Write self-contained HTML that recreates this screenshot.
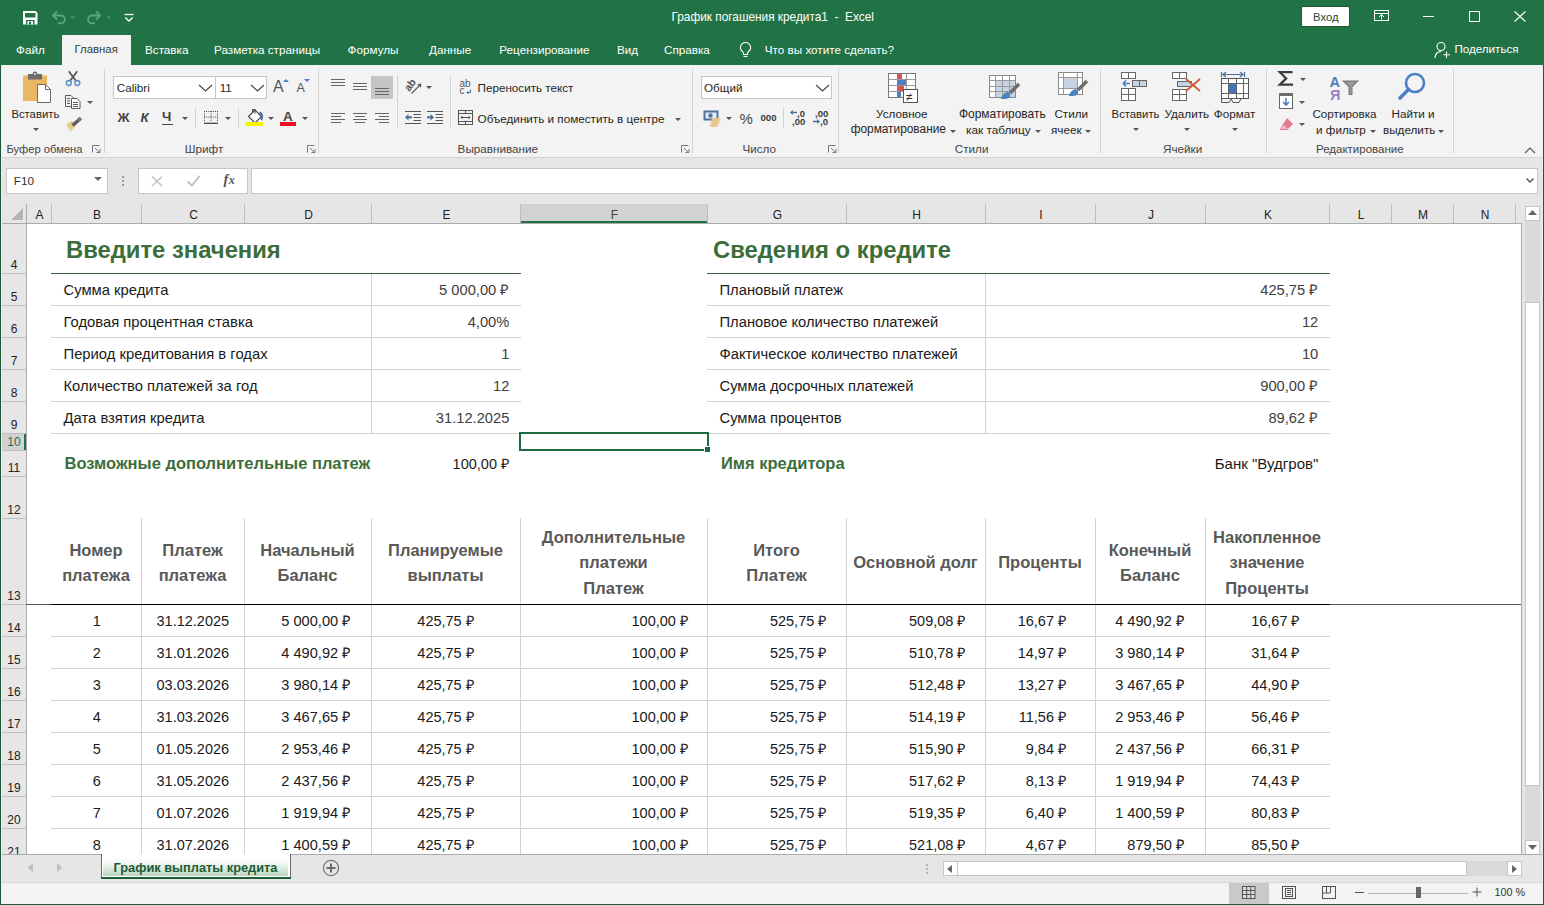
<!DOCTYPE html>
<html><head><meta charset="utf-8"><style>
html,body{margin:0;padding:0;width:1544px;height:905px;overflow:hidden;background:#fff;font-family:"Liberation Sans", sans-serif}
.a{position:absolute}
.t{line-height:1;white-space:nowrap}
svg{overflow:visible}
</style></head><body>
<div class="a" style="left:0px;top:0px;width:1544px;height:65px;background:#217346"></div>
<div class="a t" style="left:671.5px;top:11.77px;font-size:11.85px;color:#ffffff;font-weight:400;">График погашения кредита1&nbsp; -&nbsp; Excel</div>
<div class="a" style="left:1302px;top:7px;width:47px;height:19px;background:#fff;border-radius:1px;box-shadow:0 0 0 1px #1b5a35"></div>
<div class="a t" style="left:1313px;top:11.83px;font-size:11.3px;color:#2f4a3a;font-weight:400;">Вход</div>
<svg class="a" style="left:1374px;top:10px;" width="16" height="12" viewBox="0 0 16 12"><rect x="0.5" y="0.5" width="14" height="10" fill="none" stroke="#fff"/><path d="M0.5 3.5h14" stroke="#fff"/><path d="M7.5 9.5V5M5 7l2.5-2.5L10 7" stroke="#fff" fill="none"/></svg>
<div class="a" style="left:1423px;top:16px;width:11px;height:1px;background:#fff"></div>
<svg class="a" style="left:1468px;top:10px;" width="13" height="13" viewBox="0 0 13 13"><rect x="1.5" y="1.5" width="10" height="10" fill="none" stroke="#fff"/></svg>
<svg class="a" style="left:1513px;top:10px;" width="14" height="13" viewBox="0 0 14 13"><path d="M1.5 1.5l11 10M12.5 1.5l-11 10" stroke="#fff" stroke-width="1.1"/></svg>
<div class="a" style="left:62px;top:35px;width:69px;height:30px;background:#f3f3f3"></div>
<div class="a t" style="left:16px;top:43.90px;font-size:11.7px;color:#ffffff;font-weight:400;">Файл</div>
<div class="a t" style="left:74.5px;top:44.15px;font-size:11.4px;color:#2e3d35;font-weight:400;">Главная</div>
<div class="a t" style="left:145px;top:43.90px;font-size:11.7px;color:#ffffff;font-weight:400;">Вставка</div>
<div class="a t" style="left:214px;top:43.90px;font-size:11.7px;color:#ffffff;font-weight:400;">Разметка страницы</div>
<div class="a t" style="left:347.6px;top:43.90px;font-size:11.7px;color:#ffffff;font-weight:400;">Формулы</div>
<div class="a t" style="left:429px;top:43.90px;font-size:11.7px;color:#ffffff;font-weight:400;">Данные</div>
<div class="a t" style="left:499.3px;top:43.90px;font-size:11.7px;color:#ffffff;font-weight:400;">Рецензирование</div>
<div class="a t" style="left:617px;top:43.90px;font-size:11.7px;color:#ffffff;font-weight:400;">Вид</div>
<div class="a t" style="left:664px;top:43.90px;font-size:11.7px;color:#ffffff;font-weight:400;">Справка</div>
<div class="a t" style="left:764.8px;top:43.90px;font-size:11.7px;color:#ffffff;font-weight:400;">Что вы хотите сделать?</div>
<svg class="a" style="left:738px;top:41px;" width="15" height="18" viewBox="0 0 15 18"><path d="M7.5 1.5a5 5 0 0 0-3 9c.6.6 1 1.4 1 2.3v.7h4v-.7c0-.9.4-1.7 1-2.3a5 5 0 0 0-3-9z" fill="none" stroke="#fff" stroke-width="1.1"/><path d="M5.5 15.5h4" stroke="#fff" stroke-width="1.1"/></svg>
<svg class="a" style="left:1434px;top:41px;" width="17" height="18" viewBox="0 0 17 18"><circle cx="7" cy="5.5" r="4" fill="none" stroke="#fff" stroke-width="1.1"/><path d="M1 17c0-4 2.5-6.5 6-6.5" fill="none" stroke="#fff" stroke-width="1.1"/><path d="M12.5 10.5v6.5M9.5 13.8h6.5" stroke="#fff" stroke-width="1.1"/></svg>
<div class="a t" style="left:1454.5px;top:43.48px;font-size:11.6px;color:#ffffff;font-weight:400;">Поделиться</div>
<div class="a" style="left:1px;top:65px;width:1542px;height:92px;background:#f3f3f3"></div>
<div class="a" style="left:1px;top:157px;width:1542px;height:1px;background:#d4d4d4"></div>
<div class="a" style="left:104px;top:69px;width:1px;height:84px;background:#d2d2d2"></div>
<div class="a" style="left:318px;top:69px;width:1px;height:84px;background:#d2d2d2"></div>
<div class="a" style="left:692px;top:69px;width:1px;height:84px;background:#d2d2d2"></div>
<div class="a" style="left:838px;top:69px;width:1px;height:84px;background:#d2d2d2"></div>
<div class="a" style="left:1100px;top:69px;width:1px;height:84px;background:#d2d2d2"></div>
<div class="a" style="left:1266px;top:69px;width:1px;height:84px;background:#d2d2d2"></div>
<div class="a" style="left:1453px;top:69px;width:1px;height:84px;background:#d2d2d2"></div>
<div class="a t" style="left:6.5px;top:143.72px;font-size:11.2px;color:#444444;font-weight:400;">Буфер обмена</div>
<div class="a t" style="left:184.8px;top:143.10px;font-size:11.7px;color:#444444;font-weight:400;">Шрифт</div>
<div class="a t" style="left:457.6px;top:143.10px;font-size:11.7px;color:#444444;font-weight:400;">Выравнивание</div>
<div class="a t" style="left:742.4px;top:143.10px;font-size:11.7px;color:#444444;font-weight:400;">Число</div>
<div class="a t" style="left:954.8px;top:143.10px;font-size:11.7px;color:#444444;font-weight:400;">Стили</div>
<div class="a t" style="left:1163px;top:143.10px;font-size:11.7px;color:#444444;font-weight:400;">Ячейки</div>
<div class="a t" style="left:1316px;top:143.67px;font-size:11.5px;color:#444444;font-weight:400;">Редактирование</div>
<svg class="a" style="left:92px;top:145px;" width="9" height="8" viewBox="0 0 9 8"><path d="M0.5 7.5V0.5h7" fill="none" stroke="#777"/><path d="M3 3l5 5M4.5 7.5h3.5V4" fill="none" stroke="#777"/></svg>
<svg class="a" style="left:307px;top:145px;" width="9" height="8" viewBox="0 0 9 8"><path d="M0.5 7.5V0.5h7" fill="none" stroke="#777"/><path d="M3 3l5 5M4.5 7.5h3.5V4" fill="none" stroke="#777"/></svg>
<svg class="a" style="left:681px;top:145px;" width="9" height="8" viewBox="0 0 9 8"><path d="M0.5 7.5V0.5h7" fill="none" stroke="#777"/><path d="M3 3l5 5M4.5 7.5h3.5V4" fill="none" stroke="#777"/></svg>
<svg class="a" style="left:828px;top:145px;" width="9" height="8" viewBox="0 0 9 8"><path d="M0.5 7.5V0.5h7" fill="none" stroke="#777"/><path d="M3 3l5 5M4.5 7.5h3.5V4" fill="none" stroke="#777"/></svg>
<svg class="a" style="left:1524px;top:146px;" width="12" height="8" viewBox="0 0 12 8"><path d="M1 7l5-5 5 5" fill="none" stroke="#555" stroke-width="1.1"/></svg>
<div class="a t" style="left:11.4px;top:108.63px;font-size:11.3px;color:#262626;font-weight:400;">Вставить</div>
<svg class="a" style="left:33px;top:128px;" width="6" height="4" viewBox="0 0 6 4"><path d="M0 0h6l-3 3z" fill="#555"/></svg>
<svg class="a" style="left:87px;top:101px;" width="6" height="4" viewBox="0 0 6 4"><path d="M0 0h6l-3 3z" fill="#555"/></svg>
<div class="a" style="left:113px;top:76px;width:103px;height:23px;background:#fff;border:1px solid #c6c6c6;box-sizing:border-box"></div>
<div class="a" style="left:215px;top:76px;width:52px;height:23px;background:#fff;border:1px solid #c6c6c6;box-sizing:border-box"></div>
<div class="a t" style="left:116.7px;top:82.10px;font-size:11.7px;color:#262626;font-weight:400;">Calibri</div>
<div class="a t" style="left:219.7px;top:82.10px;font-size:11.7px;color:#262626;font-weight:400;">11</div>
<svg class="a" style="left:198px;top:84px;" width="15" height="8" viewBox="0 0 15 8"><path d="M1 1l6.5 6 6.5-6" fill="none" stroke="#444" stroke-width="1.1"/></svg>
<svg class="a" style="left:249.5px;top:84px;" width="15" height="8" viewBox="0 0 15 8"><path d="M1 1l6.5 6 6.5-6" fill="none" stroke="#444" stroke-width="1.1"/></svg>
<div class="a t" style="left:273px;top:79.26px;font-size:16px;color:#555;font-weight:400;">A</div>
<svg class="a" style="left:283px;top:78px;" width="6" height="4" viewBox="0 0 6 4"><path d="M0 4l3-3 3 3z" fill="#4a7fc1"/></svg>
<div class="a t" style="left:296.5px;top:82.22px;font-size:12.5px;color:#555;font-weight:400;">A</div>
<svg class="a" style="left:304px;top:79px;" width="6" height="4" viewBox="0 0 6 4"><path d="M0 0l3 3 3-3z" fill="#4a7fc1"/></svg>
<div class="a t" style="left:117.5px;top:110.54px;font-size:13.3px;color:#444;font-weight:700;">Ж</div>
<div class="a t" style="left:140.5px;top:110.54px;font-size:13.3px;color:#444;font-weight:700;font-style:italic">К</div>
<div class="a t" style="left:162px;top:110.04px;font-size:13.3px;color:#444;font-weight:700;">Ч</div>
<div class="a" style="left:162px;top:124px;width:11px;height:1px;background:#444"></div>
<svg class="a" style="left:182px;top:117px;" width="6" height="4" viewBox="0 0 6 4"><path d="M0 0h6l-3 3z" fill="#555"/></svg>
<div class="a" style="left:195px;top:108px;width:1px;height:20px;background:#d2d2d2"></div>
<svg class="a" style="left:224.5px;top:117px;" width="6" height="4" viewBox="0 0 6 4"><path d="M0 0h6l-3 3z" fill="#555"/></svg>
<div class="a" style="left:238px;top:108px;width:1px;height:20px;background:#d2d2d2"></div>
<svg class="a" style="left:268px;top:117px;" width="6" height="4" viewBox="0 0 6 4"><path d="M0 0h6l-3 3z" fill="#555"/></svg>
<div class="a t" style="left:283px;top:110.07px;font-size:13.5px;color:#444;font-weight:700;">A</div>
<div class="a" style="left:280px;top:122px;width:16px;height:4px;background:#e81123"></div>
<svg class="a" style="left:302px;top:117px;" width="6" height="4" viewBox="0 0 6 4"><path d="M0 0h6l-3 3z" fill="#555"/></svg>
<svg class="a" style="left:331px;top:79px;" width="16" height="10" viewBox="0 0 16 10"><path d="M0 0.5h14" stroke="#666"/><path d="M0 3.5h14" stroke="#666"/><path d="M0 6.5h14" stroke="#666"/></svg>
<svg class="a" style="left:353px;top:83px;" width="16" height="10" viewBox="0 0 16 10"><path d="M0 0.5h14" stroke="#666"/><path d="M0 3.5h14" stroke="#666"/><path d="M0 6.5h14" stroke="#666"/></svg>
<div class="a" style="left:371px;top:76px;width:22px;height:23px;background:#c5c5c5"></div>
<svg class="a" style="left:375px;top:88px;" width="16" height="10" viewBox="0 0 16 10"><path d="M0 0.5h14" stroke="#666"/><path d="M0 3.5h14" stroke="#666"/><path d="M0 6.5h14" stroke="#666"/></svg>
<svg class="a" style="left:331px;top:113px;" width="16" height="13" viewBox="0 0 16 13"><path d="M0 0.5h14" stroke="#666"/><path d="M0 3.5h10" stroke="#666"/><path d="M0 6.5h14" stroke="#666"/><path d="M0 9.5h10" stroke="#666"/></svg>
<svg class="a" style="left:353px;top:113px;" width="16" height="13" viewBox="0 0 16 13"><path d="M0 0.5h14" stroke="#666"/><path d="M2 3.5h10" stroke="#666"/><path d="M0 6.5h14" stroke="#666"/><path d="M2 9.5h10" stroke="#666"/></svg>
<svg class="a" style="left:375px;top:113px;" width="16" height="13" viewBox="0 0 16 13"><path d="M0 0.5h14" stroke="#666"/><path d="M4 3.5h10" stroke="#666"/><path d="M0 6.5h14" stroke="#666"/><path d="M4 9.5h10" stroke="#666"/></svg>
<div class="a" style="left:397px;top:76px;width:1px;height:52px;background:#d2d2d2"></div>
<svg class="a" style="left:425.5px;top:86px;" width="6" height="4" viewBox="0 0 6 4"><path d="M0 0h6l-3 3z" fill="#555"/></svg>
<div class="a" style="left:450px;top:76px;width:1px;height:52px;background:#d2d2d2"></div>
<div class="a t" style="left:477.6px;top:82.13px;font-size:11.66px;color:#262626;font-weight:400;">Переносить текст</div>
<div class="a t" style="left:477.6px;top:112.60px;font-size:11.7px;color:#262626;font-weight:400;">Объединить и поместить в центре</div>
<svg class="a" style="left:675px;top:118px;" width="6" height="4" viewBox="0 0 6 4"><path d="M0 0h6l-3 3z" fill="#555"/></svg>
<div class="a" style="left:701px;top:76px;width:131px;height:23px;background:#fff;border:1px solid #c6c6c6;box-sizing:border-box"></div>
<div class="a t" style="left:704px;top:82.10px;font-size:11.7px;color:#262626;font-weight:400;">Общий</div>
<svg class="a" style="left:815px;top:84px;" width="15" height="8" viewBox="0 0 15 8"><path d="M1 1l6.5 6 6.5-6" fill="none" stroke="#444" stroke-width="1.1"/></svg>
<svg class="a" style="left:726px;top:117px;" width="6" height="4" viewBox="0 0 6 4"><path d="M0 0h6l-3 3z" fill="#555"/></svg>
<div class="a t" style="left:739.5px;top:111.30px;font-size:15px;color:#444;font-weight:400;">%</div>
<div class="a t" style="left:760.5px;top:113.37px;font-size:9.6px;color:#3a3a3a;font-weight:700;">000</div>
<div class="a" style="left:783px;top:108px;width:1px;height:20px;background:#d2d2d2"></div>
<svg class="a" style="left:888px;top:73px;" width="31" height="31" viewBox="0 0 31 31"><rect x="0.5" y="0.5" width="27" height="24" fill="#fff" stroke="#777"/><path d="M9.5 0.5v24M18.5 0.5v24M0.5 6.5h27M0.5 12.5h27M0.5 18.5h27" stroke="#999"/><rect x="9" y="1" width="5" height="5" fill="#d9534f"/><rect x="9" y="7" width="9" height="5" fill="#4a7fc1"/><rect x="9" y="13" width="7" height="5" fill="#d9534f"/><rect x="9" y="19" width="4" height="5" fill="#4a7fc1"/><rect x="15.5" y="16.5" width="14" height="13" fill="#fff" stroke="#555"/><text x="18" y="28" font-family="Liberation Sans" font-size="12" fill="#333">≠</text></svg>
<div class="a t" style="left:876px;top:108.40px;font-size:11.7px;color:#262626;font-weight:400;">Условное</div>
<div class="a t" style="left:850.7px;top:123.86px;font-size:11.86px;color:#262626;font-weight:400;">форматирование</div>
<svg class="a" style="left:949.5px;top:130px;" width="6" height="4" viewBox="0 0 6 4"><path d="M0 0h6l-3 3z" fill="#555"/></svg>
<svg class="a" style="left:989px;top:75px;" width="31" height="31" viewBox="0 0 31 31"><rect x="0.5" y="0.5" width="26" height="22" fill="#fff" stroke="#888"/><rect x="6" y="5" width="20" height="17" fill="#c5d3e3"/><path d="M6.5 0.5v22M13.5 0.5v22M20.5 0.5v22M0.5 5.5h26M0.5 11.5h26M0.5 16.5h26" stroke="#999"/><path d="M30 9l-9 9" stroke="#6d6d6d" stroke-width="3.5"/><path d="M19 17c-3 0-6 3-7 7h4c4 0 6-3 5-5z" fill="#4a7fc1"/></svg>
<div class="a t" style="left:959px;top:108.98px;font-size:11.95px;color:#262626;font-weight:400;">Форматировать</div>
<div class="a t" style="left:966px;top:124.71px;font-size:11.8px;color:#262626;font-weight:400;">как таблицу</div>
<svg class="a" style="left:1035px;top:130px;" width="6" height="4" viewBox="0 0 6 4"><path d="M0 0h6l-3 3z" fill="#555"/></svg>
<svg class="a" style="left:1058px;top:72px;" width="30" height="31" viewBox="0 0 30 31"><rect x="0.5" y="0.5" width="24" height="22" fill="#fff" stroke="#888"/><rect x="5" y="5" width="15" height="12" fill="#c5d3e3"/><path d="M5.5 0.5v22M19.5 0.5v22M0.5 5.5h24M0.5 16.5h24" stroke="#999"/><path d="M29 9l-9 9" stroke="#6d6d6d" stroke-width="3.5"/><path d="M18 17c-3 0-6 3-7 7h4c4 0 6-3 5-5z" fill="#4a7fc1"/></svg>
<div class="a t" style="left:1054.4px;top:108.40px;font-size:11.7px;color:#262626;font-weight:400;">Стили</div>
<div class="a t" style="left:1051px;top:124.00px;font-size:11.7px;color:#262626;font-weight:400;">ячеек</div>
<svg class="a" style="left:1085px;top:130px;" width="6" height="4" viewBox="0 0 6 4"><path d="M0 0h6l-3 3z" fill="#555"/></svg>
<svg class="a" style="left:1121px;top:72px;" width="28" height="29" viewBox="0 0 28 29"><rect x="0.5" y="0.5" width="14" height="6" fill="#fff" stroke="#666"/><path d="M7.5 0.5v6" stroke="#666"/><rect x="11.5" y="8.5" width="14" height="6" fill="#c5d3e3" stroke="#666"/><path d="M18.5 8.5v6" stroke="#666"/><path d="M2 11.5h7M2 11.5l3-3M2 11.5l3 3" stroke="#4a7fc1" stroke-width="1.6" fill="none"/><rect x="0.5" y="16.5" width="14" height="12" fill="#fff" stroke="#666"/><path d="M7.5 16.5v12M0.5 22.5h14" stroke="#666"/></svg>
<div class="a t" style="left:1111.6px;top:108.73px;font-size:11.3px;color:#262626;font-weight:400;">Вставить</div>
<svg class="a" style="left:1133px;top:128px;" width="6" height="4" viewBox="0 0 6 4"><path d="M0 0h6l-3 3z" fill="#555"/></svg>
<svg class="a" style="left:1172px;top:72px;" width="30" height="29" viewBox="0 0 30 29"><rect x="0.5" y="0.5" width="14" height="6" fill="#fff" stroke="#666"/><path d="M7.5 0.5v6" stroke="#666"/><rect x="5.5" y="9.5" width="14" height="5" fill="#c5d3e3" stroke="#666"/><rect x="0.5" y="17.5" width="14" height="11" fill="#fff" stroke="#666"/><path d="M7.5 17.5v11M0.5 22.5h14" stroke="#666"/><path d="M14 7l14 12M28 7L14 19" stroke="#d0573a" stroke-width="1.8"/></svg>
<div class="a t" style="left:1164.5px;top:108.40px;font-size:11.7px;color:#262626;font-weight:400;">Удалить</div>
<svg class="a" style="left:1184px;top:128px;" width="6" height="4" viewBox="0 0 6 4"><path d="M0 0h6l-3 3z" fill="#555"/></svg>
<div class="a t" style="left:1213.8px;top:108.40px;font-size:11.7px;color:#262626;font-weight:400;">Формат</div>
<svg class="a" style="left:1232px;top:128px;" width="6" height="4" viewBox="0 0 6 4"><path d="M0 0h6l-3 3z" fill="#555"/></svg>
<svg class="a" style="left:1300px;top:78px;" width="6" height="4" viewBox="0 0 6 4"><path d="M0 0h6l-3 3z" fill="#555"/></svg>
<svg class="a" style="left:1279px;top:93px;" width="15" height="17" viewBox="0 0 15 17"><rect x="0.5" y="0.5" width="13" height="15" fill="#fff" stroke="#666"/><rect x="0" y="0" width="14" height="3" fill="#6d6d6d"/><path d="M7 5v7M4 9l3 3 3-3" stroke="#4a7fc1" stroke-width="1.6" fill="none"/></svg>
<svg class="a" style="left:1298.5px;top:101px;" width="6" height="4" viewBox="0 0 6 4"><path d="M0 0h6l-3 3z" fill="#555"/></svg>
<svg class="a" style="left:1279px;top:117px;" width="15" height="14" viewBox="0 0 15 14"><path d="M8 1l6 6-6 6-7-0v-1z" fill="#e07b8e"/><path d="M1 12l4-4 4 4" fill="#f2b8c3"/></svg>
<svg class="a" style="left:1298.5px;top:123px;" width="6" height="4" viewBox="0 0 6 4"><path d="M0 0h6l-3 3z" fill="#555"/></svg>
<div class="a t" style="left:1329.5px;top:75.23px;font-size:14.5px;color:#4a7fc1;font-weight:700;">A</div>
<div class="a t" style="left:1330px;top:88.23px;font-size:14.5px;color:#9b7fc8;font-weight:700;">Я</div>
<div class="a t" style="left:1312.4px;top:108.40px;font-size:11.7px;color:#262626;font-weight:400;">Сортировка</div>
<div class="a t" style="left:1316px;top:124.00px;font-size:11.7px;color:#262626;font-weight:400;">и фильтр</div>
<svg class="a" style="left:1370px;top:130px;" width="6" height="4" viewBox="0 0 6 4"><path d="M0 0h6l-3 3z" fill="#555"/></svg>
<svg class="a" style="left:1398px;top:72px;" width="30" height="30" viewBox="0 0 30 30"><circle cx="17" cy="11" r="9" fill="none" stroke="#4a7fc1" stroke-width="2.6"/><path d="M10.5 17.5L2 26" stroke="#4a7fc1" stroke-width="3.6" stroke-linecap="round"/></svg>
<div class="a t" style="left:1391.5px;top:108.40px;font-size:11.7px;color:#262626;font-weight:400;">Найти и</div>
<div class="a t" style="left:1383px;top:124.00px;font-size:11.7px;color:#262626;font-weight:400;">выделить</div>
<svg class="a" style="left:1437.5px;top:130px;" width="6" height="4" viewBox="0 0 6 4"><path d="M0 0h6l-3 3z" fill="#555"/></svg>
<div class="a" style="left:1px;top:158px;width:1542px;height:46px;background:#e6e6e6"></div>
<div class="a" style="left:6px;top:168px;width:102px;height:26px;background:#fff;border:1px solid #c6c6c6;box-sizing:border-box"></div>
<div class="a t" style="left:13.7px;top:175.81px;font-size:11.8px;color:#333;font-weight:400;">F10</div>
<svg class="a" style="left:94px;top:177px;" width="8" height="5" viewBox="0 0 8 5"><path d="M0 0h8l-4 4z" fill="#666"/></svg>
<div class="a" style="left:122px;top:176px;width:2px;height:2px;background:#9a9a9a"></div>
<div class="a" style="left:122px;top:180px;width:2px;height:2px;background:#9a9a9a"></div>
<div class="a" style="left:122px;top:184px;width:2px;height:2px;background:#9a9a9a"></div>
<div class="a" style="left:138px;top:168px;width:110px;height:26px;background:#fff;border:1px solid #c6c6c6;box-sizing:border-box"></div>
<svg class="a" style="left:151px;top:175px;" width="12" height="12" viewBox="0 0 12 12"><path d="M1 1.5l10 9.5M11 1.5L1 11" stroke="#c2c2c2" stroke-width="1.5"/></svg>
<svg class="a" style="left:186px;top:174px;" width="15" height="13" viewBox="0 0 15 13"><path d="M1.5 7.5l4.5 4L13.5 2" stroke="#c2c2c2" stroke-width="2" fill="none"/></svg>
<div class="a t" style="left:223.5px;top:172.33px;font-size:14.5px;color:#555;font-weight:700;font-family:'Liberation Serif',serif"><i>f</i><i style="font-size:12px;margin-left:0.5px">x</i></div>
<div class="a" style="left:251px;top:168px;width:1287px;height:26px;background:#fff;border:1px solid #c6c6c6;box-sizing:border-box"></div>
<svg class="a" style="left:1526px;top:178px;" width="8" height="5" viewBox="0 0 8 5"><path d="M0.5 0.5l3.5 3.5 3.5-3.5" stroke="#555" stroke-width="1.4" fill="none"/></svg>
<div class="a" style="left:1px;top:204px;width:1521px;height:19px;background:#e6e6e6"></div>
<div class="a" style="left:520px;top:204px;width:187px;height:19px;background:#d2d2d2"></div>
<div class="a" style="left:520px;top:221px;width:188px;height:2px;background:#217346"></div>
<div class="a" style="left:1px;top:223px;width:1521px;height:1px;background:#ababab"></div>
<div class="a" style="left:51px;top:204px;width:1px;height:19px;background:#bdbdbd"></div>
<div class="a" style="left:141px;top:204px;width:1px;height:19px;background:#bdbdbd"></div>
<div class="a" style="left:244px;top:204px;width:1px;height:19px;background:#bdbdbd"></div>
<div class="a" style="left:371px;top:204px;width:1px;height:19px;background:#bdbdbd"></div>
<div class="a" style="left:520px;top:204px;width:1px;height:19px;background:#bdbdbd"></div>
<div class="a" style="left:707px;top:204px;width:1px;height:19px;background:#bdbdbd"></div>
<div class="a" style="left:846px;top:204px;width:1px;height:19px;background:#bdbdbd"></div>
<div class="a" style="left:985px;top:204px;width:1px;height:19px;background:#bdbdbd"></div>
<div class="a" style="left:1095px;top:204px;width:1px;height:19px;background:#bdbdbd"></div>
<div class="a" style="left:1205px;top:204px;width:1px;height:19px;background:#bdbdbd"></div>
<div class="a" style="left:1329px;top:204px;width:1px;height:19px;background:#bdbdbd"></div>
<div class="a" style="left:1391px;top:204px;width:1px;height:19px;background:#bdbdbd"></div>
<div class="a" style="left:1453px;top:204px;width:1px;height:19px;background:#bdbdbd"></div>
<div class="a" style="left:1515px;top:204px;width:1px;height:19px;background:#bdbdbd"></div>
<div class="a t" style="left:-260.5px;width:600px;text-align:center;top:209.14px;font-size:12px;color:#222;font-weight:400;">A</div>
<div class="a t" style="left:-203.0px;width:600px;text-align:center;top:209.14px;font-size:12px;color:#222;font-weight:400;">B</div>
<div class="a t" style="left:-106.5px;width:600px;text-align:center;top:209.14px;font-size:12px;color:#222;font-weight:400;">C</div>
<div class="a t" style="left:8.5px;width:600px;text-align:center;top:209.14px;font-size:12px;color:#222;font-weight:400;">D</div>
<div class="a t" style="left:146.5px;width:600px;text-align:center;top:209.14px;font-size:12px;color:#222;font-weight:400;">E</div>
<div class="a t" style="left:314.5px;width:600px;text-align:center;top:209.14px;font-size:12px;color:#444;font-weight:400;">F</div>
<div class="a t" style="left:477.5px;width:600px;text-align:center;top:209.14px;font-size:12px;color:#222;font-weight:400;">G</div>
<div class="a t" style="left:616.5px;width:600px;text-align:center;top:209.14px;font-size:12px;color:#222;font-weight:400;">H</div>
<div class="a t" style="left:741.0px;width:600px;text-align:center;top:209.14px;font-size:12px;color:#222;font-weight:400;">I</div>
<div class="a t" style="left:851.0px;width:600px;text-align:center;top:209.14px;font-size:12px;color:#222;font-weight:400;">J</div>
<div class="a t" style="left:968.0px;width:600px;text-align:center;top:209.14px;font-size:12px;color:#222;font-weight:400;">K</div>
<div class="a t" style="left:1061.0px;width:600px;text-align:center;top:209.14px;font-size:12px;color:#222;font-weight:400;">L</div>
<div class="a t" style="left:1123.0px;width:600px;text-align:center;top:209.14px;font-size:12px;color:#222;font-weight:400;">M</div>
<div class="a t" style="left:1185.0px;width:600px;text-align:center;top:209.14px;font-size:12px;color:#222;font-weight:400;">N</div>
<svg class="a" style="left:10px;top:207px;" width="14" height="14" viewBox="0 0 14 14"><path d="M13 1v12H1z" fill="#b4b4b4"/></svg>
<div class="a" style="left:26px;top:204px;width:1px;height:650px;background:#ababab"></div>
<div class="a" style="left:1px;top:224px;width:25px;height:630px;background:#e6e6e6"></div>
<div class="a" style="left:1px;top:433px;width:25px;height:17px;background:#d2d2d2"></div>
<div class="a" style="left:24px;top:433px;width:2px;height:17px;background:#217346"></div>
<div class="a" style="left:1px;top:273px;width:25px;height:1px;background:#bdbdbd"></div>
<div class="a t" style="left:-286px;width:600px;text-align:center;top:259.34px;font-size:12px;color:#222;font-weight:400;">4</div>
<div class="a" style="left:1px;top:305px;width:25px;height:1px;background:#bdbdbd"></div>
<div class="a t" style="left:-286px;width:600px;text-align:center;top:291.34px;font-size:12px;color:#222;font-weight:400;">5</div>
<div class="a" style="left:1px;top:337px;width:25px;height:1px;background:#bdbdbd"></div>
<div class="a t" style="left:-286px;width:600px;text-align:center;top:323.34px;font-size:12px;color:#222;font-weight:400;">6</div>
<div class="a" style="left:1px;top:369px;width:25px;height:1px;background:#bdbdbd"></div>
<div class="a t" style="left:-286px;width:600px;text-align:center;top:355.34px;font-size:12px;color:#222;font-weight:400;">7</div>
<div class="a" style="left:1px;top:401px;width:25px;height:1px;background:#bdbdbd"></div>
<div class="a t" style="left:-286px;width:600px;text-align:center;top:387.34px;font-size:12px;color:#222;font-weight:400;">8</div>
<div class="a" style="left:1px;top:433px;width:25px;height:1px;background:#bdbdbd"></div>
<div class="a t" style="left:-286px;width:600px;text-align:center;top:419.34px;font-size:12px;color:#222;font-weight:400;">9</div>
<div class="a" style="left:1px;top:450px;width:25px;height:1px;background:#bdbdbd"></div>
<div class="a t" style="left:-286px;width:600px;text-align:center;top:436.34px;font-size:12px;color:#217346;font-weight:400;">10</div>
<div class="a" style="left:1px;top:476px;width:25px;height:1px;background:#bdbdbd"></div>
<div class="a t" style="left:-286px;width:600px;text-align:center;top:462.34px;font-size:12px;color:#222;font-weight:400;">11</div>
<div class="a" style="left:1px;top:518px;width:25px;height:1px;background:#bdbdbd"></div>
<div class="a t" style="left:-286px;width:600px;text-align:center;top:504.34px;font-size:12px;color:#222;font-weight:400;">12</div>
<div class="a" style="left:1px;top:604px;width:25px;height:1px;background:#bdbdbd"></div>
<div class="a t" style="left:-286px;width:600px;text-align:center;top:590.34px;font-size:12px;color:#222;font-weight:400;">13</div>
<div class="a" style="left:1px;top:636px;width:25px;height:1px;background:#bdbdbd"></div>
<div class="a t" style="left:-286px;width:600px;text-align:center;top:622.34px;font-size:12px;color:#222;font-weight:400;">14</div>
<div class="a" style="left:1px;top:668px;width:25px;height:1px;background:#bdbdbd"></div>
<div class="a t" style="left:-286px;width:600px;text-align:center;top:654.34px;font-size:12px;color:#222;font-weight:400;">15</div>
<div class="a" style="left:1px;top:700px;width:25px;height:1px;background:#bdbdbd"></div>
<div class="a t" style="left:-286px;width:600px;text-align:center;top:686.34px;font-size:12px;color:#222;font-weight:400;">16</div>
<div class="a" style="left:1px;top:732px;width:25px;height:1px;background:#bdbdbd"></div>
<div class="a t" style="left:-286px;width:600px;text-align:center;top:718.34px;font-size:12px;color:#222;font-weight:400;">17</div>
<div class="a" style="left:1px;top:764px;width:25px;height:1px;background:#bdbdbd"></div>
<div class="a t" style="left:-286px;width:600px;text-align:center;top:750.34px;font-size:12px;color:#222;font-weight:400;">18</div>
<div class="a" style="left:1px;top:796px;width:25px;height:1px;background:#bdbdbd"></div>
<div class="a t" style="left:-286px;width:600px;text-align:center;top:782.34px;font-size:12px;color:#222;font-weight:400;">19</div>
<div class="a" style="left:1px;top:828px;width:25px;height:1px;background:#bdbdbd"></div>
<div class="a t" style="left:-286px;width:600px;text-align:center;top:814.34px;font-size:12px;color:#222;font-weight:400;">20</div>
<div class="a t" style="left:-286px;width:600px;text-align:center;top:846.34px;font-size:12px;color:#222;font-weight:400;">21</div>
<div class="a" style="left:27px;top:224px;width:1494px;height:630px;background:#fff"></div>
<div class="a t" style="left:66px;top:237.85px;font-size:23.8px;color:#3b6e3b;font-weight:700;">Введите значения</div>
<div class="a t" style="left:713px;top:237.85px;font-size:23.8px;color:#3b6e3b;font-weight:700;">Сведения о кредите</div>
<div class="a" style="left:51px;top:273px;width:470px;height:1px;background:#3d5c3d"></div>
<div class="a" style="left:707px;top:273px;width:623px;height:1px;background:#3d5c3d"></div>
<div class="a t" style="left:63.5px;top:283.07px;font-size:14.8px;color:#1a1a1a;font-weight:400;">Сумма кредита</div>
<div class="a t" style="left:-90.69999999999999px;width:600px;text-align:right;top:282.56px;font-size:14.7px;color:#404040;font-weight:400;">5 000,00 ₽</div>
<div class="a t" style="left:719.5px;top:282.51px;font-size:14.75px;color:#1a1a1a;font-weight:400;">Плановый платеж</div>
<div class="a t" style="left:718.3px;width:600px;text-align:right;top:282.56px;font-size:14.7px;color:#404040;font-weight:400;">425,75 ₽</div>
<div class="a" style="left:51px;top:305px;width:470px;height:1px;background:#d2d2d2"></div>
<div class="a" style="left:707px;top:305px;width:623px;height:1px;background:#d2d2d2"></div>
<div class="a t" style="left:63.5px;top:315.07px;font-size:14.8px;color:#1a1a1a;font-weight:400;">Годовая процентная ставка</div>
<div class="a t" style="left:-90.69999999999999px;width:600px;text-align:right;top:314.56px;font-size:14.7px;color:#404040;font-weight:400;">4,00%</div>
<div class="a t" style="left:719.5px;top:314.51px;font-size:14.75px;color:#1a1a1a;font-weight:400;">Плановое количество платежей</div>
<div class="a t" style="left:718.3px;width:600px;text-align:right;top:314.56px;font-size:14.7px;color:#404040;font-weight:400;">12</div>
<div class="a" style="left:51px;top:337px;width:470px;height:1px;background:#d2d2d2"></div>
<div class="a" style="left:707px;top:337px;width:623px;height:1px;background:#d2d2d2"></div>
<div class="a t" style="left:63.5px;top:347.07px;font-size:14.8px;color:#1a1a1a;font-weight:400;">Период кредитования в годах</div>
<div class="a t" style="left:-90.69999999999999px;width:600px;text-align:right;top:346.56px;font-size:14.7px;color:#404040;font-weight:400;">1</div>
<div class="a t" style="left:719.5px;top:346.51px;font-size:14.75px;color:#1a1a1a;font-weight:400;">Фактическое количество платежей</div>
<div class="a t" style="left:718.3px;width:600px;text-align:right;top:346.56px;font-size:14.7px;color:#404040;font-weight:400;">10</div>
<div class="a" style="left:51px;top:369px;width:470px;height:1px;background:#d2d2d2"></div>
<div class="a" style="left:707px;top:369px;width:623px;height:1px;background:#d2d2d2"></div>
<div class="a t" style="left:63.5px;top:379.07px;font-size:14.8px;color:#1a1a1a;font-weight:400;">Количество платежей за год</div>
<div class="a t" style="left:-90.69999999999999px;width:600px;text-align:right;top:378.56px;font-size:14.7px;color:#404040;font-weight:400;">12</div>
<div class="a t" style="left:719.5px;top:378.51px;font-size:14.75px;color:#1a1a1a;font-weight:400;">Сумма досрочных платежей</div>
<div class="a t" style="left:718.3px;width:600px;text-align:right;top:378.56px;font-size:14.7px;color:#404040;font-weight:400;">900,00 ₽</div>
<div class="a" style="left:51px;top:401px;width:470px;height:1px;background:#d2d2d2"></div>
<div class="a" style="left:707px;top:401px;width:623px;height:1px;background:#d2d2d2"></div>
<div class="a t" style="left:63.5px;top:411.07px;font-size:14.8px;color:#1a1a1a;font-weight:400;">Дата взятия кредита</div>
<div class="a t" style="left:-90.69999999999999px;width:600px;text-align:right;top:410.56px;font-size:14.7px;color:#404040;font-weight:400;">31.12.2025</div>
<div class="a t" style="left:719.5px;top:410.51px;font-size:14.75px;color:#1a1a1a;font-weight:400;">Сумма процентов</div>
<div class="a t" style="left:718.3px;width:600px;text-align:right;top:410.56px;font-size:14.7px;color:#404040;font-weight:400;">89,62 ₽</div>
<div class="a" style="left:51px;top:433px;width:470px;height:1px;background:#d2d2d2"></div>
<div class="a" style="left:707px;top:433px;width:623px;height:1px;background:#d2d2d2"></div>
<div class="a" style="left:371px;top:274px;width:1px;height:159px;background:#d2d2d2"></div>
<div class="a" style="left:985px;top:274px;width:1px;height:159px;background:#d2d2d2"></div>
<div class="a t" style="left:64.5px;top:454.83px;font-size:16.5px;color:#3b6e3b;font-weight:700;width:306px;overflow:hidden;white-space:nowrap">Возможные дополнительные платеж</div>
<div class="a t" style="left:-91px;width:600px;text-align:right;top:456.53px;font-size:14.5px;color:#1a1a1a;font-weight:400;">100,00 ₽</div>
<div class="a t" style="left:721px;top:454.83px;font-size:16.5px;color:#3b6e3b;font-weight:700;">Имя кредитора</div>
<div class="a t" style="left:718.3px;width:600px;text-align:right;top:456.10px;font-size:15px;color:#1a1a1a;font-weight:400;">Банк "Вудгров"</div>
<div class="a" style="left:519px;top:432px;width:190px;height:19px;border:2px solid #1e6b40;box-sizing:border-box"></div>
<div class="a" style="left:705px;top:447px;width:5px;height:5px;background:#1e6b40;outline:1px solid #fff"></div>
<div class="a t" style="left:-204.0px;width:600px;text-align:center;top:541.73px;font-size:16.5px;color:#595959;font-weight:700;">Номер</div>
<div class="a t" style="left:-204.0px;width:600px;text-align:center;top:566.93px;font-size:16.5px;color:#595959;font-weight:700;">платежа</div>
<div class="a t" style="left:-107.5px;width:600px;text-align:center;top:541.73px;font-size:16.5px;color:#595959;font-weight:700;">Платеж</div>
<div class="a t" style="left:-107.5px;width:600px;text-align:center;top:566.93px;font-size:16.5px;color:#595959;font-weight:700;">платежа</div>
<div class="a t" style="left:7.5px;width:600px;text-align:center;top:541.73px;font-size:16.5px;color:#595959;font-weight:700;">Начальный</div>
<div class="a t" style="left:7.5px;width:600px;text-align:center;top:566.93px;font-size:16.5px;color:#595959;font-weight:700;">Баланс</div>
<div class="a t" style="left:145.5px;width:600px;text-align:center;top:541.73px;font-size:16.5px;color:#595959;font-weight:700;">Планируемые</div>
<div class="a t" style="left:145.5px;width:600px;text-align:center;top:566.93px;font-size:16.5px;color:#595959;font-weight:700;">выплаты</div>
<div class="a t" style="left:313.5px;width:600px;text-align:center;top:529.13px;font-size:16.5px;color:#595959;font-weight:700;">Дополнительные</div>
<div class="a t" style="left:313.5px;width:600px;text-align:center;top:554.33px;font-size:16.5px;color:#595959;font-weight:700;">платежи</div>
<div class="a t" style="left:313.5px;width:600px;text-align:center;top:579.53px;font-size:16.5px;color:#595959;font-weight:700;">Платеж</div>
<div class="a t" style="left:476.5px;width:600px;text-align:center;top:541.73px;font-size:16.5px;color:#595959;font-weight:700;">Итого</div>
<div class="a t" style="left:476.5px;width:600px;text-align:center;top:566.93px;font-size:16.5px;color:#595959;font-weight:700;">Платеж</div>
<div class="a t" style="left:615.5px;width:600px;text-align:center;top:554.33px;font-size:16.5px;color:#595959;font-weight:700;">Основной долг</div>
<div class="a t" style="left:740.0px;width:600px;text-align:center;top:554.33px;font-size:16.5px;color:#595959;font-weight:700;">Проценты</div>
<div class="a t" style="left:850.0px;width:600px;text-align:center;top:541.73px;font-size:16.5px;color:#595959;font-weight:700;">Конечный</div>
<div class="a t" style="left:850.0px;width:600px;text-align:center;top:566.93px;font-size:16.5px;color:#595959;font-weight:700;">Баланс</div>
<div class="a t" style="left:967.0px;width:600px;text-align:center;top:529.13px;font-size:16.5px;color:#595959;font-weight:700;">Накопленное</div>
<div class="a t" style="left:967.0px;width:600px;text-align:center;top:554.33px;font-size:16.5px;color:#595959;font-weight:700;">значение</div>
<div class="a t" style="left:967.0px;width:600px;text-align:center;top:579.53px;font-size:16.5px;color:#595959;font-weight:700;">Проценты</div>
<div class="a" style="left:141px;top:518px;width:1px;height:336px;background:#d2d2d2"></div>
<div class="a" style="left:244px;top:518px;width:1px;height:336px;background:#d2d2d2"></div>
<div class="a" style="left:371px;top:518px;width:1px;height:336px;background:#d2d2d2"></div>
<div class="a" style="left:520px;top:518px;width:1px;height:336px;background:#d2d2d2"></div>
<div class="a" style="left:707px;top:518px;width:1px;height:336px;background:#d2d2d2"></div>
<div class="a" style="left:846px;top:518px;width:1px;height:336px;background:#d2d2d2"></div>
<div class="a" style="left:985px;top:518px;width:1px;height:336px;background:#d2d2d2"></div>
<div class="a" style="left:1095px;top:518px;width:1px;height:336px;background:#d2d2d2"></div>
<div class="a" style="left:1205px;top:518px;width:1px;height:336px;background:#d2d2d2"></div>
<div class="a" style="left:26px;top:604px;width:25px;height:1px;background:#5a5a5a"></div>
<div class="a" style="left:51px;top:604px;width:1279px;height:1px;background:#000"></div>
<div class="a" style="left:1330px;top:604px;width:191px;height:1px;background:#5a5a5a"></div>
<div class="a t" style="left:-203.2px;width:600px;text-align:center;top:613.73px;font-size:14.5px;color:#1a1a1a;font-weight:400;">1</div>
<div class="a t" style="left:-107.19999999999999px;width:600px;text-align:center;top:613.73px;font-size:14.5px;color:#1a1a1a;font-weight:400;">31.12.2025</div>
<div class="a t" style="left:-248.8px;width:600px;text-align:right;top:613.64px;font-size:14.6px;color:#1a1a1a;font-weight:400;">5 000,00 ₽</div>
<div class="a t" style="left:-126.30000000000001px;width:600px;text-align:right;top:613.73px;font-size:14.5px;color:#1a1a1a;font-weight:400;">425,75 ₽</div>
<div class="a t" style="left:87.89999999999998px;width:600px;text-align:right;top:613.73px;font-size:14.5px;color:#1a1a1a;font-weight:400;">100,00 ₽</div>
<div class="a t" style="left:226.29999999999995px;width:600px;text-align:right;top:613.73px;font-size:14.5px;color:#1a1a1a;font-weight:400;">525,75 ₽</div>
<div class="a t" style="left:365.4px;width:600px;text-align:right;top:613.73px;font-size:14.5px;color:#1a1a1a;font-weight:400;">509,08 ₽</div>
<div class="a t" style="left:466px;width:600px;text-align:right;top:613.73px;font-size:14.5px;color:#1a1a1a;font-weight:400;">16,67 ₽</div>
<div class="a t" style="left:585px;width:600px;text-align:right;top:613.64px;font-size:14.6px;color:#1a1a1a;font-weight:400;">4 490,92 ₽</div>
<div class="a t" style="left:699.5px;width:600px;text-align:right;top:613.73px;font-size:14.5px;color:#1a1a1a;font-weight:400;">16,67 ₽</div>
<div class="a" style="left:51px;top:636px;width:1279px;height:1px;background:#d2d2d2"></div>
<div class="a t" style="left:-203.2px;width:600px;text-align:center;top:645.73px;font-size:14.5px;color:#1a1a1a;font-weight:400;">2</div>
<div class="a t" style="left:-107.19999999999999px;width:600px;text-align:center;top:645.73px;font-size:14.5px;color:#1a1a1a;font-weight:400;">31.01.2026</div>
<div class="a t" style="left:-248.8px;width:600px;text-align:right;top:645.64px;font-size:14.6px;color:#1a1a1a;font-weight:400;">4 490,92 ₽</div>
<div class="a t" style="left:-126.30000000000001px;width:600px;text-align:right;top:645.73px;font-size:14.5px;color:#1a1a1a;font-weight:400;">425,75 ₽</div>
<div class="a t" style="left:87.89999999999998px;width:600px;text-align:right;top:645.73px;font-size:14.5px;color:#1a1a1a;font-weight:400;">100,00 ₽</div>
<div class="a t" style="left:226.29999999999995px;width:600px;text-align:right;top:645.73px;font-size:14.5px;color:#1a1a1a;font-weight:400;">525,75 ₽</div>
<div class="a t" style="left:365.4px;width:600px;text-align:right;top:645.73px;font-size:14.5px;color:#1a1a1a;font-weight:400;">510,78 ₽</div>
<div class="a t" style="left:466px;width:600px;text-align:right;top:645.73px;font-size:14.5px;color:#1a1a1a;font-weight:400;">14,97 ₽</div>
<div class="a t" style="left:585px;width:600px;text-align:right;top:645.64px;font-size:14.6px;color:#1a1a1a;font-weight:400;">3 980,14 ₽</div>
<div class="a t" style="left:699.5px;width:600px;text-align:right;top:645.73px;font-size:14.5px;color:#1a1a1a;font-weight:400;">31,64 ₽</div>
<div class="a" style="left:51px;top:668px;width:1279px;height:1px;background:#d2d2d2"></div>
<div class="a t" style="left:-203.2px;width:600px;text-align:center;top:677.73px;font-size:14.5px;color:#1a1a1a;font-weight:400;">3</div>
<div class="a t" style="left:-107.19999999999999px;width:600px;text-align:center;top:677.73px;font-size:14.5px;color:#1a1a1a;font-weight:400;">03.03.2026</div>
<div class="a t" style="left:-248.8px;width:600px;text-align:right;top:677.64px;font-size:14.6px;color:#1a1a1a;font-weight:400;">3 980,14 ₽</div>
<div class="a t" style="left:-126.30000000000001px;width:600px;text-align:right;top:677.73px;font-size:14.5px;color:#1a1a1a;font-weight:400;">425,75 ₽</div>
<div class="a t" style="left:87.89999999999998px;width:600px;text-align:right;top:677.73px;font-size:14.5px;color:#1a1a1a;font-weight:400;">100,00 ₽</div>
<div class="a t" style="left:226.29999999999995px;width:600px;text-align:right;top:677.73px;font-size:14.5px;color:#1a1a1a;font-weight:400;">525,75 ₽</div>
<div class="a t" style="left:365.4px;width:600px;text-align:right;top:677.73px;font-size:14.5px;color:#1a1a1a;font-weight:400;">512,48 ₽</div>
<div class="a t" style="left:466px;width:600px;text-align:right;top:677.73px;font-size:14.5px;color:#1a1a1a;font-weight:400;">13,27 ₽</div>
<div class="a t" style="left:585px;width:600px;text-align:right;top:677.64px;font-size:14.6px;color:#1a1a1a;font-weight:400;">3 467,65 ₽</div>
<div class="a t" style="left:699.5px;width:600px;text-align:right;top:677.73px;font-size:14.5px;color:#1a1a1a;font-weight:400;">44,90 ₽</div>
<div class="a" style="left:51px;top:700px;width:1279px;height:1px;background:#d2d2d2"></div>
<div class="a t" style="left:-203.2px;width:600px;text-align:center;top:709.73px;font-size:14.5px;color:#1a1a1a;font-weight:400;">4</div>
<div class="a t" style="left:-107.19999999999999px;width:600px;text-align:center;top:709.73px;font-size:14.5px;color:#1a1a1a;font-weight:400;">31.03.2026</div>
<div class="a t" style="left:-248.8px;width:600px;text-align:right;top:709.64px;font-size:14.6px;color:#1a1a1a;font-weight:400;">3 467,65 ₽</div>
<div class="a t" style="left:-126.30000000000001px;width:600px;text-align:right;top:709.73px;font-size:14.5px;color:#1a1a1a;font-weight:400;">425,75 ₽</div>
<div class="a t" style="left:87.89999999999998px;width:600px;text-align:right;top:709.73px;font-size:14.5px;color:#1a1a1a;font-weight:400;">100,00 ₽</div>
<div class="a t" style="left:226.29999999999995px;width:600px;text-align:right;top:709.73px;font-size:14.5px;color:#1a1a1a;font-weight:400;">525,75 ₽</div>
<div class="a t" style="left:365.4px;width:600px;text-align:right;top:709.73px;font-size:14.5px;color:#1a1a1a;font-weight:400;">514,19 ₽</div>
<div class="a t" style="left:466px;width:600px;text-align:right;top:709.73px;font-size:14.5px;color:#1a1a1a;font-weight:400;">11,56 ₽</div>
<div class="a t" style="left:585px;width:600px;text-align:right;top:709.64px;font-size:14.6px;color:#1a1a1a;font-weight:400;">2 953,46 ₽</div>
<div class="a t" style="left:699.5px;width:600px;text-align:right;top:709.73px;font-size:14.5px;color:#1a1a1a;font-weight:400;">56,46 ₽</div>
<div class="a" style="left:51px;top:732px;width:1279px;height:1px;background:#d2d2d2"></div>
<div class="a t" style="left:-203.2px;width:600px;text-align:center;top:741.73px;font-size:14.5px;color:#1a1a1a;font-weight:400;">5</div>
<div class="a t" style="left:-107.19999999999999px;width:600px;text-align:center;top:741.73px;font-size:14.5px;color:#1a1a1a;font-weight:400;">01.05.2026</div>
<div class="a t" style="left:-248.8px;width:600px;text-align:right;top:741.64px;font-size:14.6px;color:#1a1a1a;font-weight:400;">2 953,46 ₽</div>
<div class="a t" style="left:-126.30000000000001px;width:600px;text-align:right;top:741.73px;font-size:14.5px;color:#1a1a1a;font-weight:400;">425,75 ₽</div>
<div class="a t" style="left:87.89999999999998px;width:600px;text-align:right;top:741.73px;font-size:14.5px;color:#1a1a1a;font-weight:400;">100,00 ₽</div>
<div class="a t" style="left:226.29999999999995px;width:600px;text-align:right;top:741.73px;font-size:14.5px;color:#1a1a1a;font-weight:400;">525,75 ₽</div>
<div class="a t" style="left:365.4px;width:600px;text-align:right;top:741.73px;font-size:14.5px;color:#1a1a1a;font-weight:400;">515,90 ₽</div>
<div class="a t" style="left:466px;width:600px;text-align:right;top:741.73px;font-size:14.5px;color:#1a1a1a;font-weight:400;">9,84 ₽</div>
<div class="a t" style="left:585px;width:600px;text-align:right;top:741.64px;font-size:14.6px;color:#1a1a1a;font-weight:400;">2 437,56 ₽</div>
<div class="a t" style="left:699.5px;width:600px;text-align:right;top:741.73px;font-size:14.5px;color:#1a1a1a;font-weight:400;">66,31 ₽</div>
<div class="a" style="left:51px;top:764px;width:1279px;height:1px;background:#d2d2d2"></div>
<div class="a t" style="left:-203.2px;width:600px;text-align:center;top:773.73px;font-size:14.5px;color:#1a1a1a;font-weight:400;">6</div>
<div class="a t" style="left:-107.19999999999999px;width:600px;text-align:center;top:773.73px;font-size:14.5px;color:#1a1a1a;font-weight:400;">31.05.2026</div>
<div class="a t" style="left:-248.8px;width:600px;text-align:right;top:773.64px;font-size:14.6px;color:#1a1a1a;font-weight:400;">2 437,56 ₽</div>
<div class="a t" style="left:-126.30000000000001px;width:600px;text-align:right;top:773.73px;font-size:14.5px;color:#1a1a1a;font-weight:400;">425,75 ₽</div>
<div class="a t" style="left:87.89999999999998px;width:600px;text-align:right;top:773.73px;font-size:14.5px;color:#1a1a1a;font-weight:400;">100,00 ₽</div>
<div class="a t" style="left:226.29999999999995px;width:600px;text-align:right;top:773.73px;font-size:14.5px;color:#1a1a1a;font-weight:400;">525,75 ₽</div>
<div class="a t" style="left:365.4px;width:600px;text-align:right;top:773.73px;font-size:14.5px;color:#1a1a1a;font-weight:400;">517,62 ₽</div>
<div class="a t" style="left:466px;width:600px;text-align:right;top:773.73px;font-size:14.5px;color:#1a1a1a;font-weight:400;">8,13 ₽</div>
<div class="a t" style="left:585px;width:600px;text-align:right;top:773.64px;font-size:14.6px;color:#1a1a1a;font-weight:400;">1 919,94 ₽</div>
<div class="a t" style="left:699.5px;width:600px;text-align:right;top:773.73px;font-size:14.5px;color:#1a1a1a;font-weight:400;">74,43 ₽</div>
<div class="a" style="left:51px;top:796px;width:1279px;height:1px;background:#d2d2d2"></div>
<div class="a t" style="left:-203.2px;width:600px;text-align:center;top:805.73px;font-size:14.5px;color:#1a1a1a;font-weight:400;">7</div>
<div class="a t" style="left:-107.19999999999999px;width:600px;text-align:center;top:805.73px;font-size:14.5px;color:#1a1a1a;font-weight:400;">01.07.2026</div>
<div class="a t" style="left:-248.8px;width:600px;text-align:right;top:805.64px;font-size:14.6px;color:#1a1a1a;font-weight:400;">1 919,94 ₽</div>
<div class="a t" style="left:-126.30000000000001px;width:600px;text-align:right;top:805.73px;font-size:14.5px;color:#1a1a1a;font-weight:400;">425,75 ₽</div>
<div class="a t" style="left:87.89999999999998px;width:600px;text-align:right;top:805.73px;font-size:14.5px;color:#1a1a1a;font-weight:400;">100,00 ₽</div>
<div class="a t" style="left:226.29999999999995px;width:600px;text-align:right;top:805.73px;font-size:14.5px;color:#1a1a1a;font-weight:400;">525,75 ₽</div>
<div class="a t" style="left:365.4px;width:600px;text-align:right;top:805.73px;font-size:14.5px;color:#1a1a1a;font-weight:400;">519,35 ₽</div>
<div class="a t" style="left:466px;width:600px;text-align:right;top:805.73px;font-size:14.5px;color:#1a1a1a;font-weight:400;">6,40 ₽</div>
<div class="a t" style="left:585px;width:600px;text-align:right;top:805.64px;font-size:14.6px;color:#1a1a1a;font-weight:400;">1 400,59 ₽</div>
<div class="a t" style="left:699.5px;width:600px;text-align:right;top:805.73px;font-size:14.5px;color:#1a1a1a;font-weight:400;">80,83 ₽</div>
<div class="a" style="left:51px;top:828px;width:1279px;height:1px;background:#d2d2d2"></div>
<div class="a t" style="left:-203.2px;width:600px;text-align:center;top:837.73px;font-size:14.5px;color:#1a1a1a;font-weight:400;">8</div>
<div class="a t" style="left:-107.19999999999999px;width:600px;text-align:center;top:837.73px;font-size:14.5px;color:#1a1a1a;font-weight:400;">31.07.2026</div>
<div class="a t" style="left:-248.8px;width:600px;text-align:right;top:837.64px;font-size:14.6px;color:#1a1a1a;font-weight:400;">1 400,59 ₽</div>
<div class="a t" style="left:-126.30000000000001px;width:600px;text-align:right;top:837.73px;font-size:14.5px;color:#1a1a1a;font-weight:400;">425,75 ₽</div>
<div class="a t" style="left:87.89999999999998px;width:600px;text-align:right;top:837.73px;font-size:14.5px;color:#1a1a1a;font-weight:400;">100,00 ₽</div>
<div class="a t" style="left:226.29999999999995px;width:600px;text-align:right;top:837.73px;font-size:14.5px;color:#1a1a1a;font-weight:400;">525,75 ₽</div>
<div class="a t" style="left:365.4px;width:600px;text-align:right;top:837.73px;font-size:14.5px;color:#1a1a1a;font-weight:400;">521,08 ₽</div>
<div class="a t" style="left:466px;width:600px;text-align:right;top:837.73px;font-size:14.5px;color:#1a1a1a;font-weight:400;">4,67 ₽</div>
<div class="a t" style="left:585px;width:600px;text-align:right;top:837.64px;font-size:14.6px;color:#1a1a1a;font-weight:400;">879,50 ₽</div>
<div class="a t" style="left:699.5px;width:600px;text-align:right;top:837.73px;font-size:14.5px;color:#1a1a1a;font-weight:400;">85,50 ₽</div>
<div class="a" style="left:1521px;top:224px;width:1px;height:631px;background:#ababab"></div>
<div class="a" style="left:1522px;top:204px;width:21px;height:651px;background:#e6e6e6"></div>
<div class="a" style="left:1525px;top:220px;width:15px;height:620px;background:#dadada"></div>
<div class="a" style="left:1525px;top:206px;width:15px;height:15px;background:#fff;border:1px solid #c6c6c6;box-sizing:border-box"></div>
<svg class="a" style="left:1528px;top:210px;" width="9" height="6" viewBox="0 0 9 6"><path d="M0 5h9L4.5 0z" fill="#666"/></svg>
<div class="a" style="left:1525px;top:302px;width:15px;height:484px;background:#fff;border:1px solid #c6c6c6;box-sizing:border-box"></div>
<div class="a" style="left:1525px;top:840px;width:15px;height:15px;background:#fff;border:1px solid #c6c6c6;box-sizing:border-box"></div>
<svg class="a" style="left:1528px;top:845px;" width="9" height="6" viewBox="0 0 9 6"><path d="M0 0h9L4.5 5z" fill="#666"/></svg>
<div class="a" style="left:1px;top:854px;width:1542px;height:1px;background:#ababab"></div>
<div class="a" style="left:1px;top:855px;width:1542px;height:27px;background:#e6e6e6"></div>
<svg class="a" style="left:27px;top:863px;" width="8" height="9" viewBox="0 0 8 9"><path d="M6 0v9L1 4.5z" fill="#bdbdbd"/></svg>
<svg class="a" style="left:55px;top:863px;" width="8" height="9" viewBox="0 0 8 9"><path d="M2 0v9l5-4.5z" fill="#bdbdbd"/></svg>
<div class="a" style="left:101px;top:854px;width:190px;height:25px;background:#fff;border-left:1px solid #6a6a6a;border-right:1px solid #6a6a6a;box-sizing:border-box"></div>
<div class="a" style="left:103px;top:857px;width:185px;height:19px;background:linear-gradient(#ffffff 0%,#f4f9f5 30%,#bcd6c3 100%)"></div>
<div class="a" style="left:101px;top:877px;width:190px;height:2px;background:#1d5e37"></div>
<div class="a t" style="left:-104.5px;width:600px;text-align:center;top:861.66px;font-size:12.8px;color:#1e5c36;font-weight:700;">График выплаты кредита</div>
<svg class="a" style="left:322px;top:859px;" width="18" height="18" viewBox="0 0 18 18"><circle cx="9" cy="9" r="7.6" fill="none" stroke="#7a7a7a" stroke-width="1.3"/><path d="M9 4.5v9M4.5 9h9" stroke="#6a6a6a" stroke-width="2"/></svg>
<div class="a" style="left:926px;top:864px;width:2px;height:2px;background:#b4b4b4"></div>
<div class="a" style="left:926px;top:868px;width:2px;height:2px;background:#b4b4b4"></div>
<div class="a" style="left:926px;top:872px;width:2px;height:2px;background:#b4b4b4"></div>
<div class="a" style="left:943px;top:861px;width:579px;height:15px;background:#dadada"></div>
<div class="a" style="left:943px;top:861px;width:15px;height:15px;background:#fff;border:1px solid #c6c6c6;box-sizing:border-box"></div>
<svg class="a" style="left:947px;top:865px;" width="6" height="8" viewBox="0 0 6 8"><path d="M5 0v8L0 4z" fill="#666"/></svg>
<div class="a" style="left:957px;top:861px;width:510px;height:15px;background:#fff;border:1px solid #c6c6c6;box-sizing:border-box"></div>
<div class="a" style="left:1507px;top:861px;width:15px;height:15px;background:#fff;border:1px solid #c6c6c6;box-sizing:border-box"></div>
<svg class="a" style="left:1512px;top:865px;" width="6" height="8" viewBox="0 0 6 8"><path d="M0 0v8l5-4z" fill="#666"/></svg>
<div class="a" style="left:1px;top:882px;width:1542px;height:22px;background:#f3f3f3"></div>
<div class="a" style="left:1px;top:882px;width:1542px;height:1px;background:#d6d6d6"></div>
<div class="a" style="left:1229px;top:883px;width:40px;height:21px;background:#c9c9c9"></div>
<div class="a" style="left:1355px;top:892px;width:9px;height:1px;background:#555"></div>
<div class="a" style="left:1368px;top:893px;width:100px;height:1px;background:#b4b4b4"></div>
<div class="a" style="left:1416px;top:887px;width:5px;height:11px;background:#666"></div>
<svg class="a" style="left:1472px;top:887px;" width="10" height="10" viewBox="0 0 10 10"><path d="M5 0.5v9M0.5 5h9" stroke="#555"/></svg>
<div class="a t" style="left:1494.4px;top:887.16px;font-size:10.8px;color:#333;font-weight:400;">100 %</div>
<div class="a" style="left:0px;top:65px;width:1px;height:840px;background:#1e5a37"></div>
<div class="a" style="left:1543px;top:65px;width:1px;height:840px;background:#1e5a37"></div>
<div class="a" style="left:1px;top:65px;width:1px;height:839px;background:#e3f1e8"></div>
<div class="a" style="left:1542px;top:65px;width:1px;height:839px;background:#e3f1e8"></div>
<div class="a" style="left:0px;top:904px;width:1544px;height:1px;background:#1e5a37"></div>
<svg class="a" style="left:0;top:0" width="1544" height="905"><path d="M23 11h12.5l2 2v11.5H23z" fill="#fff"/><rect x="25" y="13" width="10.5" height="4.5" fill="#217346"/><rect x="26" y="20" width="8.5" height="4.5" fill="#217346"/><rect x="27.5" y="21" width="5.5" height="3.5" fill="#fff"/><rect x="29" y="21.5" width="2" height="3" fill="#217346"/><path d="M53.5 15.5H61a3.9 3.9 0 0 1 0 7.8h-3" fill="none" stroke="#5ea37a" stroke-width="1.9"/><path d="M57 11.5L53 15.5L57 19.5" fill="none" stroke="#5ea37a" stroke-width="1.9"/><path d="M70 16.5h5.5l-2.75 2.5z" fill="#4f9069"/><path d="M99.5 15.5H92a3.9 3.9 0 0 0 0 7.8h3" fill="none" stroke="#5ea37a" stroke-width="1.9"/><path d="M96 11.5L100 15.5L96 19.5" fill="none" stroke="#5ea37a" stroke-width="1.9"/><path d="M106 16.5h5.5l-2.75 2.5z" fill="#4f9069"/><path d="M124.5 14.5h9" stroke="#fff" stroke-width="1.3"/><path d="M125.3 17.5l3.7 3.5 3.7-3.5" stroke="#fff" stroke-width="1.3" fill="none"/><rect x="23" y="75.5" width="24" height="25.5" fill="#eab862"/><rect x="28" y="74" width="14" height="5.5" fill="#6d6d6d"/><circle cx="35" cy="74" r="2.4" fill="#6d6d6d"/><circle cx="35" cy="74" r="0.9" fill="#f3f3f3"/><path d="M37.5 84.5h8l5 5v13h-13z" fill="#fff" stroke="#6d6d6d"/><path d="M45.5 84.5v5h5" fill="none" stroke="#6d6d6d"/><path d="M68.8 71.2L75.8 80.8M77.2 71.2L70.2 80.8" stroke="#595959" stroke-width="1.8"/><circle cx="68.8" cy="83" r="2.5" fill="#e3ebf5" stroke="#5b87c5" stroke-width="1.3"/><circle cx="77.3" cy="83" r="2.5" fill="#e3ebf5" stroke="#5b87c5" stroke-width="1.3"/><path d="M71.5 106.5H65.5V95.5H71l2 2v1" fill="none" stroke="#595959"/><path d="M67 98.5h3M67 101h3M67 103.5h3" stroke="#595959"/><path d="M71.5 98.5H77l3 3v7H71.5z" fill="#fff" stroke="#595959"/><path d="M73 102.5h5M73 104.5h5M73 106.5h5" stroke="#595959"/><path d="M66 124.5l6-4 4 5.5-5.5 5.5z" fill="#e3cf8c"/><path d="M72.5 125.5L80.5 118.5" stroke="#5f5f5f" stroke-width="3.6"/><path d="M78.3 120.4L81 118" stroke="#72846f" stroke-width="3.6"/><path d="M204.5 111v11M211 111v11M217.5 111v11M204 111.5h14M204 117h14" stroke="#444" stroke-dasharray="1 1.2"/><path d="M204 123.3h14" stroke="#444" stroke-width="1.3"/><path d="M248.5 116.5l6.5-6.5 6.5 6.5-6.5 6.5z" fill="#fff" stroke="#444" stroke-width="1.1"/><path d="M252.5 113v-3.5h2.5v4" stroke="#444" fill="none"/><path d="M259.5 112.5c2.5 1.2 3.2 4 1.8 7.5" stroke="#4a6f9a" stroke-width="2.2" fill="none"/><rect x="245.5" y="122" width="17.5" height="4" fill="#f5f500"/><text x="0" y="0" font-family="Liberation Sans" font-size="10.5" font-weight="700" fill="#555" transform="translate(409.5 92) rotate(-55)">ab</text><path d="M411.5 93.5L420.5 84.5" stroke="#555" stroke-width="1.1"/><path d="M421.5 83.5l-4.2 0.8 3.4 3.4z" fill="#555"/><path d="M405 111.5h16M413.5 114.5h7.5M413.5 117.5h7.5M413.5 120.5h7.5M405 123.5h16" stroke="#555"/><path d="M406 117.3h6" stroke="#4a6f9a" stroke-width="2"/><path d="M405 117.3l3.5-3.3v6.6z" fill="#4a6f9a"/><path d="M427 111.5h16M435.5 114.5h7.5M435.5 117.5h7.5M435.5 120.5h7.5M427 123.5h16" stroke="#555"/><path d="M427 117.3h6" stroke="#4a6f9a" stroke-width="2"/><path d="M434 117.3l-3.5-3.3v6.6z" fill="#4a6f9a"/><text x="459.5" y="86.5" font-family="Liberation Sans" font-size="10" fill="#555">ab</text><text x="459.5" y="94" font-family="Liberation Sans" font-size="10" fill="#555">c</text><path d="M470.5 89.5v3h-3.5M468.5 91l-1.5 1.5 1.5 1.5" stroke="#4a6f9a" fill="none"/><rect x="458.5" y="110.5" width="14" height="14" fill="none" stroke="#555"/><path d="M458.5 113.5h14M458.5 121.5h14M465.5 110.5v3M465.5 121.5v3" stroke="#555"/><path d="M461 117.5h9" stroke="#555"/><path d="M460.3 117.5l2.2-1.8v3.6zM470.7 117.5l-2.2-1.8v3.6z" fill="#555"/><rect x="703.5" y="110.5" width="15" height="10" fill="#4e7099"/><rect x="705.5" y="112.5" width="11" height="6" fill="#e4edf6"/><circle cx="710.5" cy="115.5" r="2.2" fill="#4e7099"/><ellipse cx="716" cy="119.5" rx="4.6" ry="1.7" fill="#e8c68a"/><ellipse cx="715" cy="122.5" rx="4.6" ry="1.7" fill="#e8c68a"/><ellipse cx="714" cy="125.3" rx="4.6" ry="1.6" fill="#e8c68a"/><text x="797" y="116.5" font-family="Liberation Sans" font-size="9.5" font-weight="700" fill="#3a3a3a">,0</text><text x="792" y="124.5" font-family="Liberation Sans" font-size="9.5" font-weight="700" fill="#3a3a3a">,00</text><path d="M791 112.5h6" stroke="#4a6f9a" stroke-width="1.5"/><path d="M790 112.5l2.8-2.6v5.2z" fill="#4a6f9a"/><text x="815" y="116.5" font-family="Liberation Sans" font-size="9.5" font-weight="700" fill="#3a3a3a">,00</text><text x="820" y="124.5" font-family="Liberation Sans" font-size="9.5" font-weight="700" fill="#3a3a3a">,0</text><path d="M813 121.5h5.5" stroke="#4a6f9a" stroke-width="1.5"/><path d="M820 121.5l-2.8-2.6v5.2z" fill="#4a6f9a"/><path d="M1221.5 72v5M1244.5 72v5M1223 74.5h20" stroke="#4a6f9a" stroke-width="1.2"/><path d="M1226 72l-3 2.5 3 2.5M1240 72l3 2.5-3 2.5" stroke="#4a6f9a" stroke-width="1.2" fill="none"/><rect x="1221.5" y="78.5" width="27" height="20" fill="#fff" stroke="#555"/><path d="M1228.5 78.5v20M1236.5 78.5v20M1243.5 78.5v20M1221.5 83.5h27M1221.5 93.5h27" stroke="#666"/><rect x="1229" y="84" width="7" height="9" fill="#3f76bd"/><path d="M1221.5 98.5v4h7.5l2.5-3.5M1231.5 99.5l1.5 3h6l2-4" stroke="#555" fill="none"/><path d="M1292.5 72.2H1279.8L1286.2 78.4L1279.8 84.6H1293" fill="none" stroke="#3c3c3c" stroke-width="2.2" stroke-linejoin="miter"/><path d="M1342 80.5h17l-6.5 6.5v8h-4v-8z" fill="#7a7a7a"/><path d="M1345 81.8h11l-4.5 4.5v7.5h-1.8v-7.5z" fill="#9a9a9a"/><rect x="1242.5" y="886.5" width="12.5" height="12" fill="#dcdcdc" stroke="#555"/><path d="M1246.7 886.5v12M1250.8 886.5v12M1242.5 890.5h12.5M1242.5 894.5h12.5" stroke="#555"/><rect x="1282.5" y="886.5" width="13" height="12" fill="none" stroke="#555"/><rect x="1285.5" y="888.5" width="7" height="8" fill="none" stroke="#555"/><path d="M1287 890.5h4M1287 892.5h4M1287 894.5h4" stroke="#555"/><rect x="1322.5" y="886.5" width="13" height="12" fill="none" stroke="#555"/><path d="M1326.5 886.5v6.5M1330.5 886.5v6.5M1322.5 893h8" stroke="#555" fill="none"/></svg>
</body></html>
